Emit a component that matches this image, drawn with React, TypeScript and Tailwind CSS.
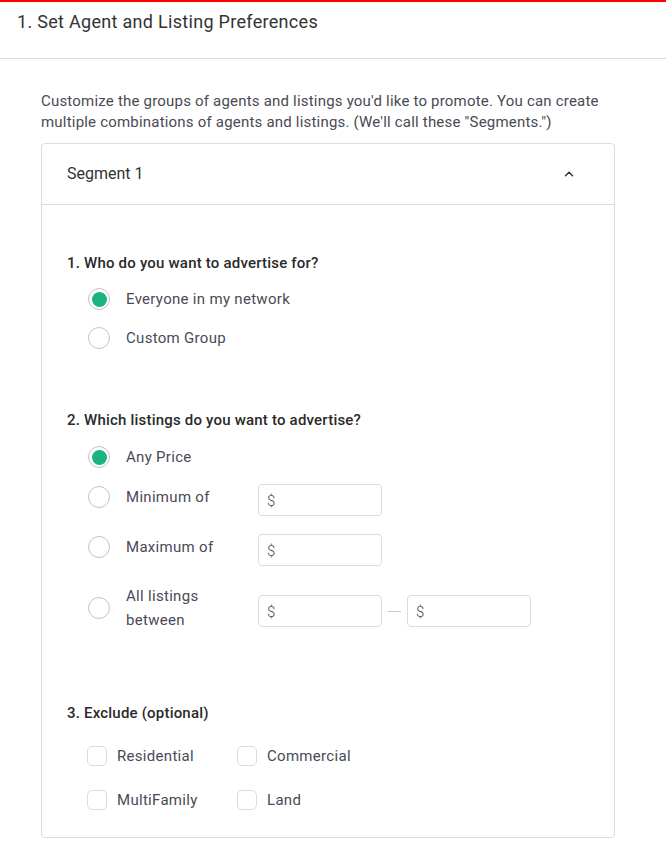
import React, { useState } from 'react';
import { ChevronUp } from 'lucide-react';

const body = { fontFamily: 'Roboto, "Liberation Sans", sans-serif' };

function Radio({ checked, label, onClick }: { checked: boolean; label: React.ReactNode; onClick: () => void }) {
  return (
    <button type="button" onClick={onClick} className="flex items-center gap-[16px] text-left">
      <span className="flex h-[22px] w-[22px] shrink-0 items-center justify-center rounded-full border-[1.5px] border-[#c4c4c4] bg-white">
        {checked && <span className="h-[15px] w-[15px] rounded-full bg-[#1bb47e]" />}
      </span>
      <span className="text-[15px] leading-[24px] tracking-[0.3px] text-[#4a4a55]">{label}</span>
    </button>
  );
}

function Checkbox({ label }: { label: string }) {
  const [on, setOn] = useState(false);
  return (
    <label className="flex h-[24px] cursor-pointer items-center gap-[10px]">
      <input type="checkbox" className="hidden" checked={on} onChange={() => setOn(!on)} />
      <span className={`h-[20px] w-[20px] rounded-[5px] border border-[#dcdcdc] ${on ? 'bg-[#1bb47e]' : 'bg-white'}`} />
      <span className="text-[15px] leading-[24px] tracking-[0.3px] text-[#4a4a55]">{label}</span>
    </label>
  );
}

function MoneyInput() {
  return (
    <div className="mt-[6px] flex h-[32px] w-[124px] items-center rounded-[4px] border border-[#dcdcdc] bg-white px-[8px] pt-[3px]">
      <span className="text-[15px] font-light text-[#4a4a55]">$</span>
      <input className="w-full bg-transparent pl-1 text-[15px] outline-none" />
    </div>
  );
}

export default function App() {
  const [who, setWho] = useState('everyone');
  const [price, setPrice] = useState('any');

  return (
    <div className="min-h-[842px] w-[666px] border-t-2 border-[#ff0000] bg-white" style={body}>
      <header className="h-[57px] border-b border-[#dcdcdc] px-[17px] pt-[8px]">
        <h1 className="text-[18px] leading-[24px] tracking-[0.3px] text-[#333]">1. Set Agent and Listing Preferences</h1>
      </header>

      <div className="pl-[41px] pr-[51px] pt-[32px]">
        <p className="text-[15px] leading-[21px] tracking-[0.2px] text-[#4a4a55]">
          Customize the groups of agents and listings you'd like to promote. You can create multiple combinations of agents
          and listings. (We'll call these "Segments.")
        </p>

        <div className="mt-[10px] rounded-[4px] border border-[#dcdcdc]">
          <div className="flex h-[61px] items-center justify-between border-b border-[#dcdcdc] pl-[25px] pr-[38px]">
            <span className="text-[16px] text-[#333]">Segment 1</span>
            <ChevronUp className="h-[14px] w-[14px] text-[#333]" strokeWidth={2.5} />
          </div>

          <div className="px-[25px] pt-[48px] pb-[25px]">
            <h2 className="text-[15px] font-medium leading-[20px] tracking-[0.2px] text-[#2a2a2a]">1. Who do you want to advertise for?</h2>
            <div className="mt-[14px] flex flex-col gap-[15px] pl-[21px]">
              <Radio checked={who === 'everyone'} onClick={() => setWho('everyone')} label="Everyone in my network" />
              <Radio checked={who === 'custom'} onClick={() => setWho('custom')} label="Custom Group" />
            </div>

            <h2 className="mt-[60px] text-[15px] font-medium leading-[20px] tracking-[0.2px] text-[#2a2a2a]">2. Which listings do you want to advertise?</h2>
            <div className="mt-[15px] flex flex-col pl-[21px]">
              <Radio checked={price === 'any'} onClick={() => setPrice('any')} label="Any Price" />
              <div className="mt-[9px] flex items-center">
                <div className="w-[170px]">
                  <Radio checked={price === 'min'} onClick={() => setPrice('min')} label="Minimum of" />
                </div>
                <MoneyInput />
              </div>
              <div className="mt-[12px] flex items-center">
                <div className="w-[170px]">
                  <Radio checked={price === 'max'} onClick={() => setPrice('max')} label="Maximum of" />
                </div>
                <MoneyInput />
              </div>
              <div className="mt-[18px] flex items-center">
                <div className="w-[170px]">
                  <Radio
                    checked={price === 'between'}
                    onClick={() => setPrice('between')}
                    label={<span className="block leading-[24px]">All listings<br />between</span>}
                  />
                </div>
                <MoneyInput />
                <span className="mx-[6px] mt-[6px] h-[1px] w-[13px] bg-[#c8c8c8]" />
                <MoneyInput />
              </div>
            </div>

            <h2 className="mt-[71px] text-[15px] font-medium leading-[20px] tracking-[0.2px] text-[#2a2a2a]">3. Exclude (optional)</h2>
            <div className="mt-[21px] grid w-[320px] grid-cols-[150px_150px] gap-y-[20px] pl-[20px]">
              <Checkbox label="Residential" />
              <Checkbox label="Commercial" />
              <Checkbox label="MultiFamily" />
              <Checkbox label="Land" />
            </div>
          </div>
        </div>
      </div>
    </div>
  );
}
